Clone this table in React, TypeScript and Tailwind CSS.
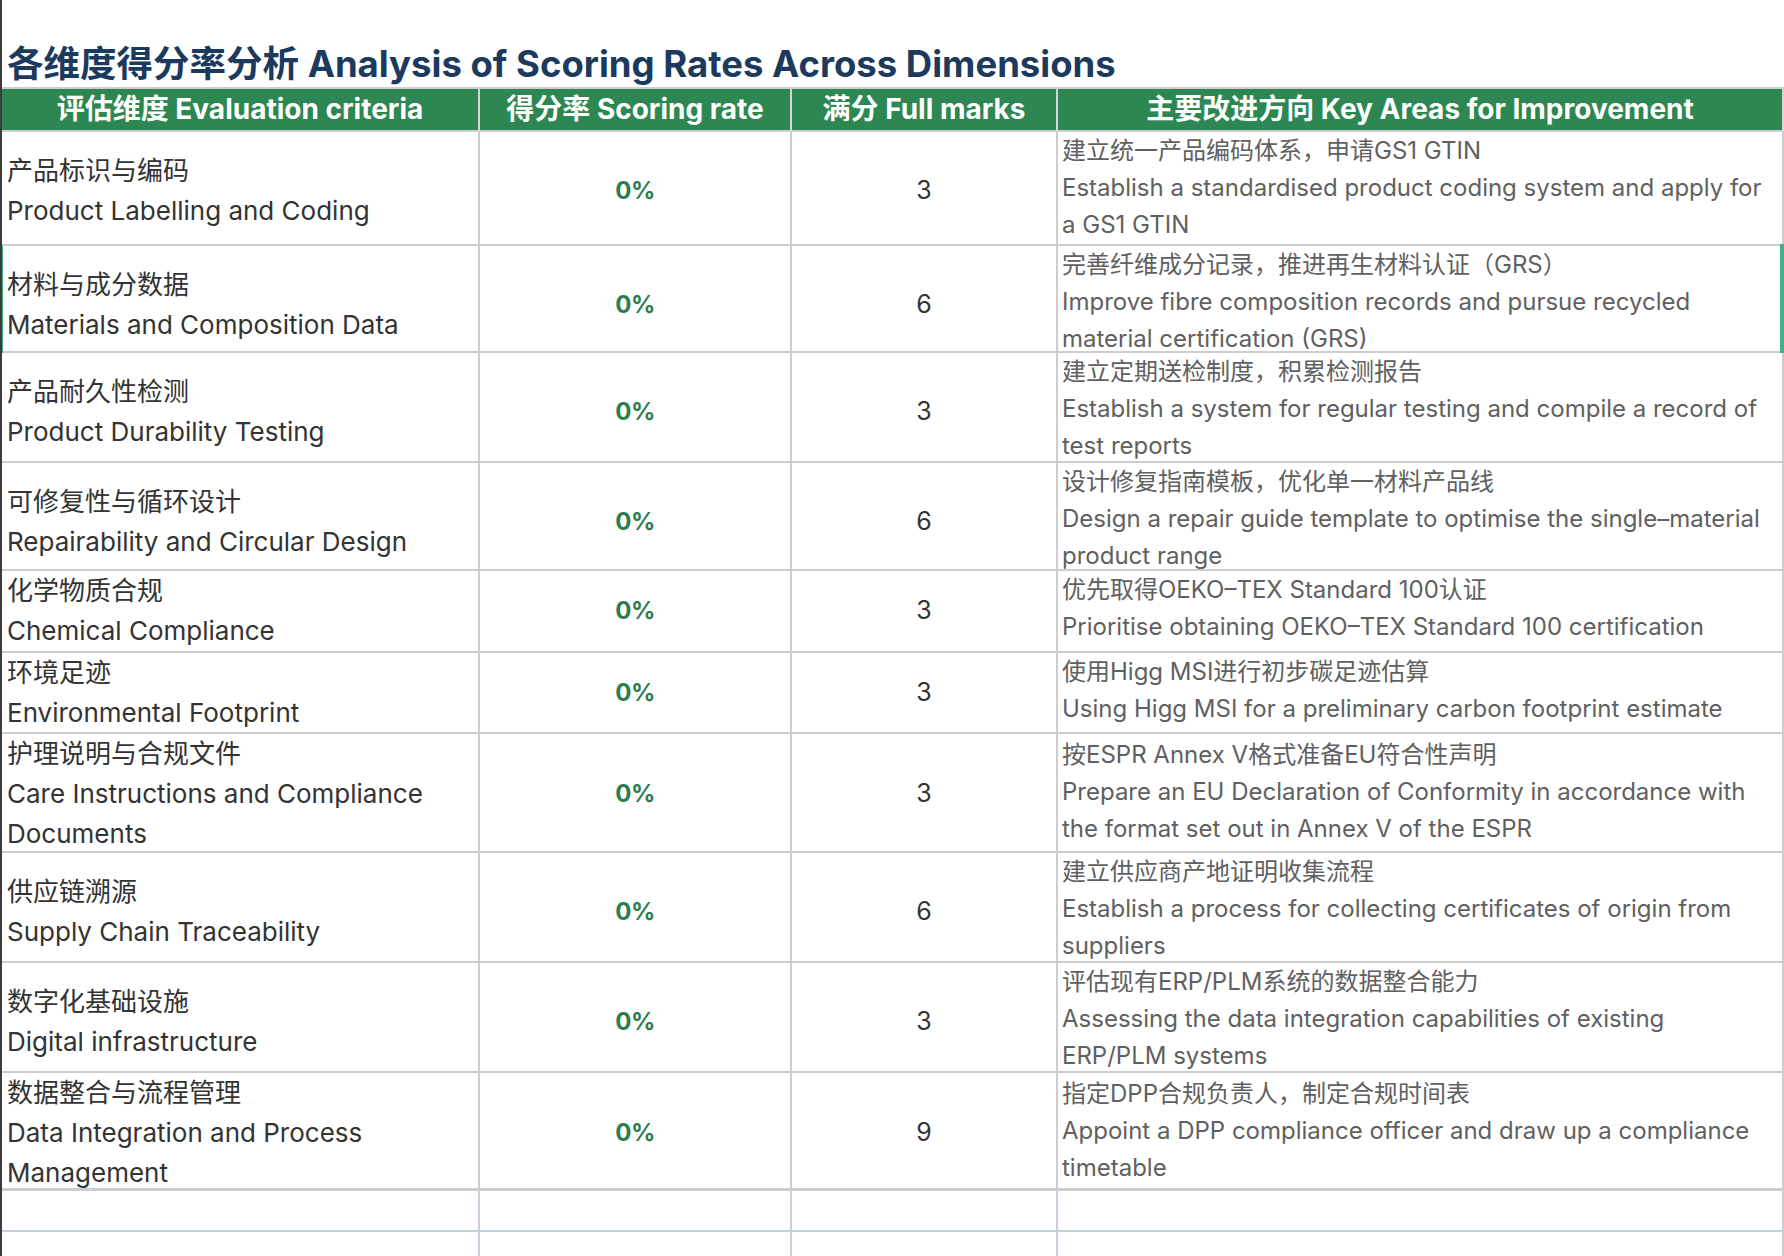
import React from 'react';

interface Row {
    zh: string;
    en: string[];
    full: number;
    tips: string[];
    h: string;
}

const rows: Row[] = [
    {
        zh: '产品标识与编码',
        en: ['Product Labelling and Coding'],
        full: 3,
        tips: ['建立统一产品编码体系，申请GS1 GTIN', 'Establish a standardised product coding system and apply for', 'a GS1 GTIN'],
        h: 'h-[114px]',
    },
    {
        zh: '材料与成分数据',
        en: ['Materials and Composition Data'],
        full: 6,
        tips: ['完善纤维成分记录，推进再生材料认证（GRS）', 'Improve fibre composition records and pursue recycled', 'material certification (GRS)'],
        h: 'h-[107px]',
    },
    {
        zh: '产品耐久性检测',
        en: ['Product Durability Testing'],
        full: 3,
        tips: ['建立定期送检制度，积累检测报告', 'Establish a system for regular testing and compile a record of', 'test reports'],
        h: 'h-[110px]',
    },
    {
        zh: '可修复性与循环设计',
        en: ['Repairability and Circular Design'],
        full: 6,
        tips: ['设计修复指南模板，优化单一材料产品线', 'Design a repair guide template to optimise the single–material', 'product range'],
        h: 'h-[108px]',
    },
    {
        zh: '化学物质合规',
        en: ['Chemical Compliance'],
        full: 3,
        tips: ['优先取得OEKO–TEX Standard 100认证', 'Prioritise obtaining OEKO–TEX Standard 100 certification'],
        h: 'h-[82px]',
    },
    {
        zh: '环境足迹',
        en: ['Environmental Footprint'],
        full: 3,
        tips: ['使用Higg MSI进行初步碳足迹估算', 'Using Higg MSI for a preliminary carbon footprint estimate'],
        h: 'h-[81px]',
    },
    {
        zh: '护理说明与合规文件',
        en: ['Care Instructions and Compliance', 'Documents'],
        full: 3,
        tips: ['按ESPR Annex V格式准备EU符合性声明', 'Prepare an EU Declaration of Conformity in accordance with', 'the format set out in Annex V of the ESPR'],
        h: 'h-[119px]',
    },
    {
        zh: '供应链溯源',
        en: ['Supply Chain Traceability'],
        full: 6,
        tips: ['建立供应商产地证明收集流程', 'Establish a process for collecting certificates of origin from', 'suppliers'],
        h: 'h-[110px]',
    },
    {
        zh: '数字化基础设施',
        en: ['Digital infrastructure'],
        full: 3,
        tips: ['评估现有ERP/PLM系统的数据整合能力', 'Assessing the data integration capabilities of existing', 'ERP/PLM systems'],
        h: 'h-[110px]',
    },
    {
        zh: '数据整合与流程管理',
        en: ['Data Integration and Process', 'Management'],
        full: 9,
        tips: ['指定DPP合规负责人，制定合规时间表', 'Appoint a DPP compliance officer and draw up a compliance', 'timetable'],
        h: 'h-[118px]',
    },
];

const font = 'font-["Inter","Noto_Sans_CJK_SC",sans-serif]';

export default function App() {
    return (
        <div className={`w-[1784px] h-[1256px] overflow-hidden bg-white border-l-2 border-[#3b3b3b] ${font}`}>
            {/* title */}
            <div className="h-[87px] pl-[5px] pt-[42px] text-[36.5px] leading-[44px] font-bold text-[#1b3a5e] whitespace-nowrap">
                各维度得分率分析 Analysis of Scoring Rates Across Dimensions
            </div>

            {/* header */}
            <div className="grid grid-cols-[478px_312px_266px_1fr] border-y-2 border-[#cfcfcf] bg-[#2d8753] text-white text-[28px] font-bold leading-[41px] h-[45px]">
                <div className="text-center border-r-2 border-[#d6d6d6] whitespace-nowrap">评估维度 Evaluation criteria</div>
                <div className="text-center border-r-2 border-[#d6d6d6] whitespace-nowrap">得分率 Scoring rate</div>
                <div className="text-center border-r-2 border-[#d6d6d6] whitespace-nowrap">满分 Full marks</div>
                <div className="text-center border-r-2 border-[#d6d6d6] whitespace-nowrap">主要改进方向 Key Areas for Improvement</div>
            </div>

            {/* data rows */}
            {rows.map((r, i) => (
                <div
                    key={i}
                    className={`relative grid grid-cols-[478px_312px_266px_1fr] ${r.h} ${i === rows.length - 1 ? 'border-b-[3px]' : 'border-b-2'} border-[#cdcdcd]`}
                >
                    <div className="flex flex-col justify-center pl-[5px] border-r-2 border-[#cdcdcd] text-[26px] leading-[40px] text-[#333333] whitespace-nowrap">
                        <div>{r.zh}</div>
                        {r.en.map((l, j) => (
                            <div key={j}>{l}</div>
                        ))}
                    </div>
                    <div className="flex items-center justify-center border-r-2 border-[#cdcdcd] text-[24px] tracking-[-0.5px] font-bold text-[#2e7d50]">
                        0%
                    </div>
                    <div className="flex items-center justify-center border-r-2 border-[#cdcdcd] text-[25px] text-[#333333]">
                        {r.full}
                    </div>
                    <div className="flex flex-col justify-center pl-[4px] pb-[6px] border-r-2 border-[#cdcdcd] text-[24px] leading-[37px] text-[#606060] whitespace-nowrap">
                        {r.tips.map((l, j) => (
                            <div key={j}>{l}</div>
                        ))}
                    </div>
                    {i === 1 && (
                        <>
                            <span className="absolute left-[-2px] top-0 bottom-[-2px] w-[3px] bg-[#3fb08a]" />
                            <span className="absolute right-0 top-[-2px] bottom-[-2px] w-[4px] bg-[#3fb08a]" />
                        </>
                    )}
                </div>
            ))}

            {/* empty rows */}
            <div className="grid grid-cols-[478px_312px_266px_1fr] h-[41px] border-b-2 border-[#c6cee0]">
                <div className="border-r-2 border-[#c6cee0]" />
                <div className="border-r-2 border-[#c6cee0]" />
                <div className="border-r-2 border-[#c6cee0]" />
                <div className="border-r-2 border-[#cdcdcd]" />
            </div>
            <div className="grid grid-cols-[478px_312px_266px_1fr] h-[41px]">
                <div className="border-r-2 border-[#c6cee0]" />
                <div className="border-r-2 border-[#c6cee0]" />
                <div className="border-r-2 border-[#c6cee0]" />
                <div className="border-r-2 border-[#cdcdcd]" />
            </div>
        </div>
    );
}
